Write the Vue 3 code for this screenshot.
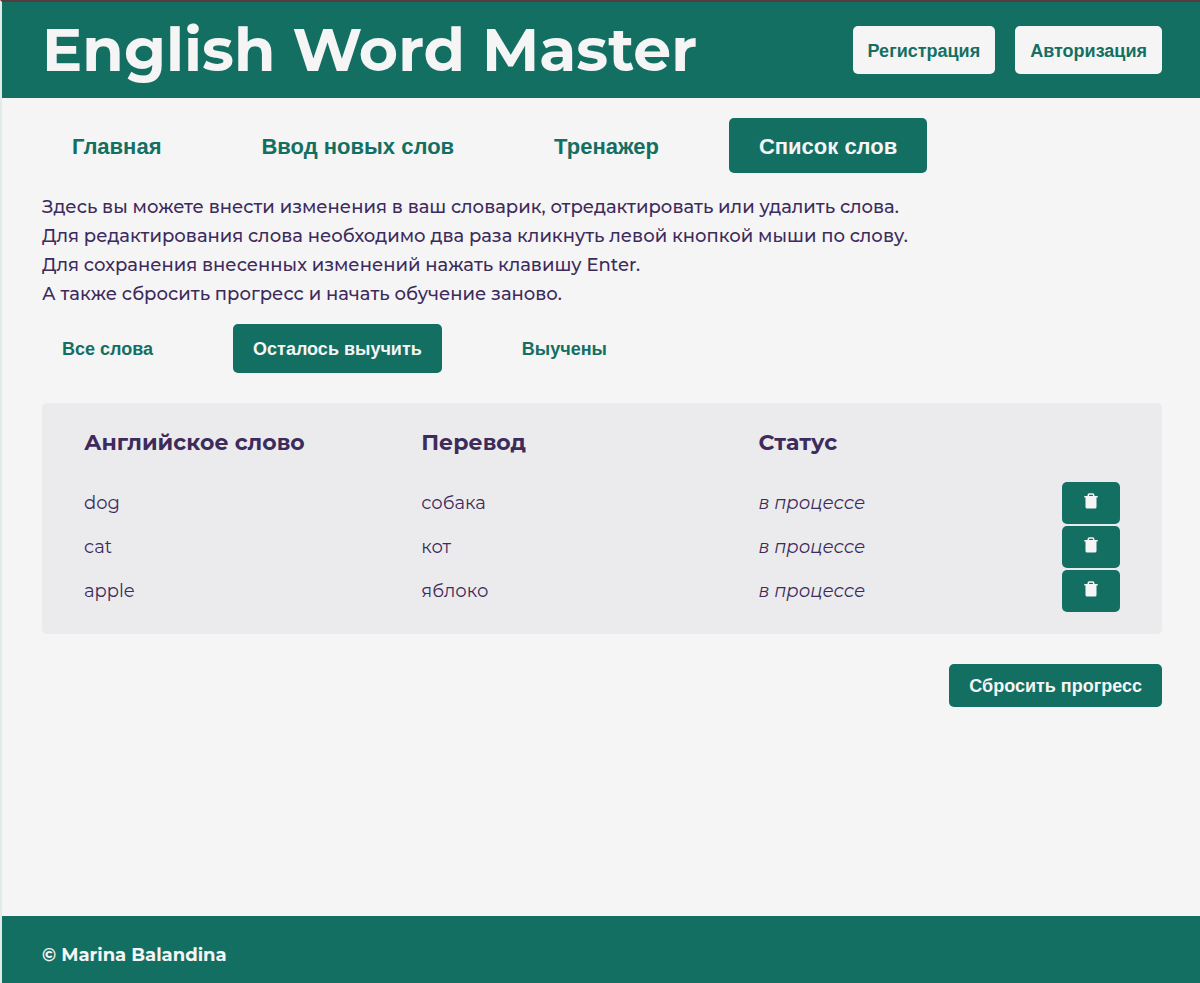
<script setup>
import { ref, computed } from 'vue'

const pages = ['Главная', 'Ввод новых слов', 'Тренажер', 'Список слов']
const currentPage = ref('Список слов')

const filters = ['Все слова', 'Осталось выучить', 'Выучены']
const currentFilter = ref('Осталось выучить')

const words = ref([
  { english: 'dog', translation: 'собака', learned: false },
  { english: 'cat', translation: 'кот', learned: false },
  { english: 'apple', translation: 'яблоко', learned: false },
])

const visibleWords = computed(() => {
  if (currentFilter.value === 'Осталось выучить') return words.value.filter((w) => !w.learned)
  if (currentFilter.value === 'Выучены') return words.value.filter((w) => w.learned)
  return words.value
})

function removeWord(word) {
  words.value = words.value.filter((w) => w !== word)
}

function resetProgress() {
  words.value.forEach((w) => (w.learned = false))
}
</script>

<template>
  <div class="page">
    <header class="header">
      <h1 class="title">English Word Master</h1>
      <div class="auth">
        <button type="button" class="btn btn-light">Регистрация</button>
        <button type="button" class="btn btn-light">Авторизация</button>
      </div>
    </header>

    <main class="main">
      <nav class="nav">
        <button
          v-for="page in pages"
          :key="page"
          type="button"
          class="btn btn-nav"
          :class="{ active: page === currentPage }"
          @click="currentPage = page"
        >{{ page }}</button>
      </nav>

      <p class="description">
        Здесь вы можете внести изменения в ваш словарик, отредактировать или удалить слова.<br />
        Для редактирования слова необходимо два раза кликнуть левой кнопкой мыши по слову.<br />
        Для сохранения внесенных изменений нажать клавишу Enter.<br />
        А также сбросить прогресс и начать обучение заново.
      </p>

      <div class="filters">
        <button
          v-for="filter in filters"
          :key="filter"
          type="button"
          class="btn btn-filter"
          :class="{ active: filter === currentFilter }"
          @click="currentFilter = filter"
        >{{ filter }}</button>
      </div>

      <div class="card">
        <table class="words">
          <thead>
            <tr>
              <th class="wide" scope="col">Английское слово</th>
              <th class="wide" scope="col">Перевод</th>
              <th scope="col">Статус</th>
              <td class="action"></td>
            </tr>
          </thead>
          <tbody>
            <tr v-for="word in visibleWords" :key="word.english">
              <td>{{ word.english }}</td>
              <td>{{ word.translation }}</td>
              <td class="status">{{ word.learned ? 'выучено' : 'в процессе' }}</td>
              <td class="action">
                <button type="button" class="btn btn-delete" aria-label="Удалить" @click="removeWord(word)">
                  <svg viewBox="0 0 18 18" width="18" height="18" aria-hidden="true">
                    <path
                      fill="currentColor"
                      fill-rule="evenodd"
                      d="M5.500 4V3.200A1.900 1.900 0 0 1 7.400 1.300h3.200a1.900 1.900 0 0 1 1.900 1.900V4h3.200v1.500H2.300V4zM7 4h4v-.7a.6.6 0 0 0-.6-.6H7.600a.6.6 0 0 0-.6.600zM3.500 5.500h11V15a1.600 1.600 0 0 1-1.600 1.600H5.100A1.600 1.600 0 0 1 3.500 15z"
                    />
                  </svg>
                </button>
              </td>
            </tr>
          </tbody>
        </table>
      </div>

      <button type="button" class="btn btn-reset" @click="resetProgress">Сбросить прогресс</button>
    </main>

    <footer class="footer">© Marina Balandina</footer>
  </div>
</template>

<style>
body {
  margin: 0;
  background: #f5f5f5;
}
</style>

<style scoped>
.page {
  box-sizing: border-box;
  min-height: 100vh;
  display: flex;
  flex-direction: column;
  border-top: 2px solid #583a3f;
  border-left: 2px solid #e3ebe9;
  background: #f5f5f5;
  color: #3d2b5c;
  font-family: Montserrat, Inter, "Open Sans", sans-serif;
  font-size: 18px;
  line-height: 29px;
}

.header {
  display: flex;
  align-items: center;
  justify-content: space-between;
  min-height: 96px;
  padding: 0 38px 0 40px;
  background: #146f63;
  color: #f5f5f5;
}

.title {
  margin: 0;
  font-size: 60px;
  font-weight: 700;
  line-height: 96px;
}

.auth {
  display: flex;
  gap: 20px;
}

.btn {
  border: 0;
  border-radius: 5px;
  background: transparent;
  color: #146f63;
  font-family: Arimo, "Liberation Sans", Arial, sans-serif;
  font-size: 18px;
  font-weight: 700;
  line-height: 21px;
  cursor: pointer;
}

.btn-light {
  padding: 15px 15px 12px;
  background: #f5f5f5;
}

.main {
  flex: 1;
  display: flex;
  flex-direction: column;
  padding: 20px 38px 20px 40px;
}

.nav {
  display: flex;
  gap: 40px;
}

.btn-nav {
  padding: 16px 30px 14px;
  font-size: 22px;
  line-height: 25px;
}

.active {
  background: #146f63;
  color: #f5f5f5;
}

.description {
  margin: 20px 0 15px;
  font-weight: 500;
}

.filters {
  display: flex;
  gap: 60px;
  margin-bottom: 30px;
}

.btn-filter {
  padding: 15px 20px 13px;
}

.card {
  padding: 20px 40px;
  border-radius: 5px;
  background: #ebebed;
}

.words {
  width: 100%;
  table-layout: fixed;
  border-spacing: 2px;
}

.words th {
  padding: 0 0 20px;
  font-size: 22px;
  font-weight: 700;
  line-height: 35px;
  text-align: left;
}

.words .wide {
  width: 32.55%;
}

.words td {
  padding: 0;
  font-weight: 400;
}

.words .status {
  font-style: italic;
}

.words .action {
  width: 58px;
}

.btn-delete {
  display: block;
  padding: 10px 20px 14px;
  background: #146f63;
  color: #f5f5f5;
}

.btn-delete svg {
  display: block;
}

.btn-reset {
  align-self: flex-end;
  margin-top: 30px;
  padding: 12px 20px 10px;
  background: #146f63;
  color: #f5f5f5;
}

.footer {
  padding: 25px 38px 13px 40px;
  background: #146f63;
  color: #f5f5f5;
  font-weight: 700;
}
</style>
